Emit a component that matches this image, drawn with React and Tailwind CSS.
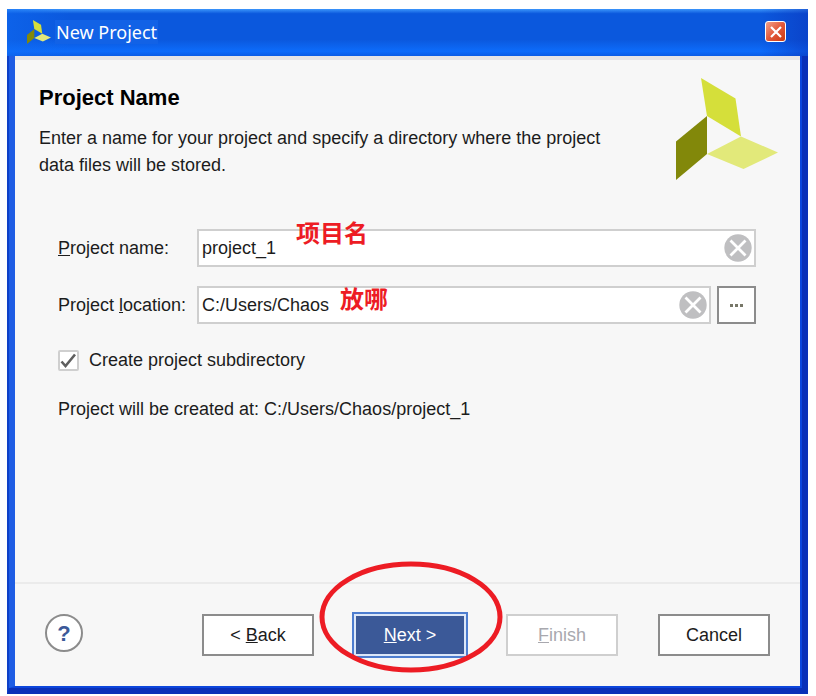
import React, { useState } from "react";

function Logo({ className }) {
  return (
    <svg viewBox="0 0 102 102" className={className} aria-hidden="true">
      <path d="M25 0 59.500 20.500 65 58.500 31 38Z" fill="#d5df3a" />
      <path d="M0 63.500 31 38V76L0 102Z" fill="#82880a" />
      <path d="M31 76 65 58.500 102 74.500 67.500 91Z" fill="#e2e97a" />
    </svg>
  );
}

function ClearIcon() {
  return (
    <svg viewBox="0 0 28 28" className="h-7 w-7" aria-hidden="true">
      <circle cx="14" cy="14" r="13.700" fill="#bfbfc1" />
      <path d="M6.500 6.500 21.500 21.500M21.500 6.500 6.500 21.500" stroke="#fff" strokeWidth="2.800" />
    </svg>
  );
}

function PathField({ id, value, onChange, note, noteClass }) {
  return (
    <div className="relative flex h-[38px] flex-1 items-center border-2 border-[#cfcfcf] bg-white pr-[2px]">
      <input
        id={id}
        type="text"
        value={value}
        onChange={(e) => onChange(e.target.value)}
        className="h-full min-w-0 flex-1 bg-transparent pl-[3px] outline-none"
      />
      <button type="button" aria-label="Clear" onClick={() => onChange("")}>
        <ClearIcon />
      </button>
      <span className={`pointer-events-none absolute font-['Noto_Sans_CJK_SC',sans-serif] text-2xl leading-6 font-bold text-[#ed1c24] ${noteClass}`}>
        {note}
      </span>
    </div>
  );
}

export default function App() {
  const [name, setName] = useState("project_1");
  const [location, setLocation] = useState("C:/Users/Chaos");
  const [subdir, setSubdir] = useState(true);

  const buttonClass = "h-[42px] w-28 border-2 bg-white";

  return (
    <div className="flex min-h-screen bg-white pt-[9px] pr-2 pb-[2px] pl-[7px] font-['Liberation_Sans',Arial,sans-serif] text-lg leading-[27px] text-[#1c1c1c]">
      <div className="flex flex-1 flex-col">
        <header className="flex h-[47px] items-center bg-[linear-gradient(to_right,#0f6cf580,transparent_8%,transparent_94%,#0a30b880),linear-gradient(to_bottom,#3c96fb,#0b58dd_10%,#0b58dd_65%,#0d6cfb_90%,#0b5ce6)] pr-[22px] pb-[2px] pl-5">
          <Logo className="h-6 w-6" />
          <h1 className="ml-1 bg-[#1262e6] px-px font-['Noto_Sans','Open_Sans',sans-serif] text-lg leading-6 text-white">
            New Project
          </h1>
          <button
            type="button"
            aria-label="Close"
            className="ml-auto flex h-[21px] w-[21px] items-center justify-center rounded-[3px] border border-white bg-linear-to-br from-[#f0a08a] via-[#e2583a] to-[#cc3a08]"
          >
            <svg viewBox="0 0 12 12" className="h-3 w-3" aria-hidden="true">
              <path d="M1 1 11 11M11 1 1 11" stroke="#fff" strokeWidth="2.200" />
            </svg>
          </button>
        </header>

        <div className="flex flex-1 border-r-[6px] border-b-[6px] border-l-2 border-r-[#0a30b8] border-b-[#0a30b8] border-l-[#0d40c8]">
          <form
            className="flex flex-1 flex-col border-r-2 border-b-2 border-l-6 border-r-[#0c46dc] border-b-[#0c46dc] border-l-[#1e5de4] bg-[#f7f7f7]"
            onSubmit={(e) => e.preventDefault()}
          >
            <div className="flex justify-between border-t-4 border-[#e6e5e7] pt-[18px] pr-[22px] pl-6">
              <div>
                <h2 className="mt-[6px] text-[22px] leading-[27px] font-bold text-black">Project Name</h2>
                <p className="mt-[14px] max-w-[600px]">
                  Enter a name for your project and specify a directory where the project data files will be stored.
                </p>
              </div>
              <Logo className="h-[102px] w-[102px] shrink-0" />
            </div>

            <div className="flex flex-1 flex-col pt-[49px] pr-11 pl-[43px]">
              <div className="flex items-center">
                <label htmlFor="project-name" className="w-[139px] shrink-0">
                  <u>P</u>roject name:
                </label>
                <PathField id="project-name" value={name} onChange={setName} note="项目名" noteClass="-top-[11px] left-[97px]" />
              </div>

              <div className="mt-[19px] flex items-center">
                <label htmlFor="project-location" className="w-[139px] shrink-0">
                  Project <u>l</u>ocation:
                </label>
                <PathField id="project-location" value={location} onChange={setLocation} note="放哪" noteClass="-top-[2px] left-[141px]" />
                <button
                  type="button"
                  aria-label="Browse"
                  className="ml-[6px] flex h-[38px] w-[39px] items-center justify-center gap-[2px] border-2 border-[#8c8c8c] bg-white"
                >
                  <span className="h-[3px] w-[3px] bg-[#777768]" />
                  <span className="h-[3px] w-[3px] bg-[#777768]" />
                  <span className="h-[3px] w-[3px] bg-[#777768]" />
                </button>
              </div>

              <label className="mt-[23px] flex items-center gap-[10px] self-start">
                <span className="relative flex">
                  <input
                    type="checkbox"
                    checked={subdir}
                    onChange={(e) => setSubdir(e.target.checked)}
                    className="peer h-[21px] w-[21px] appearance-none rounded-[2px] border-2 border-[#cfcfcf] bg-white"
                  />
                  <svg viewBox="0 0 21 21" className="pointer-events-none absolute inset-0 hidden h-[21px] w-[21px] peer-checked:block" aria-hidden="true">
                    <path d="M3.500 11.500 7.500 16 17 4.500" fill="none" stroke="#5f5f5f" strokeWidth="2.600" />
                  </svg>
                </span>
                Create project subdirectory
              </label>

              <p className="mt-[22px]">Project will be created at: C:/Users/Chaos/project_1</p>
            </div>

            <footer className="flex h-[104px] items-start border-t-2 border-[#ebebeb] px-[30px] pt-[30px]">
              <button
                type="button"
                aria-label="Help"
                className="h-[38px] w-[38px] rounded-full border-2 border-[#8c8c8c] bg-white text-[22px] font-bold text-[#3b5998]"
              >
                ?
              </button>
              <div className="ml-auto flex gap-10">
                <button type="button" className={`${buttonClass} border-[#8c8c8c]`}>
                  &lt; <u>B</u>ack
                </button>
                <div className="relative">
                  <button type="submit" className="h-[42px] w-28 border-2 border-[#dce7f8] bg-[#3b5998] text-white ring-2 ring-[#4d7dcf]">
                    <u>N</u>ext &gt;
                  </button>
                  <svg viewBox="0 0 184 112" className="pointer-events-none absolute -top-[53px] -left-[35px] h-[112px] w-[184px] max-w-none" aria-hidden="true">
                    <ellipse cx="92" cy="56" rx="89" ry="53" fill="none" stroke="#ed1c24" strokeWidth="5" />
                  </svg>
                </div>
                <button type="button" disabled className={`${buttonClass} border-[#cfcfcf] text-[#a8a8ae]`}>
                  <u>F</u>inish
                </button>
                <button type="button" className={`${buttonClass} border-[#8c8c8c]`}>
                  Cancel
                </button>
              </div>
            </footer>
          </form>
        </div>
      </div>
    </div>
  );
}
